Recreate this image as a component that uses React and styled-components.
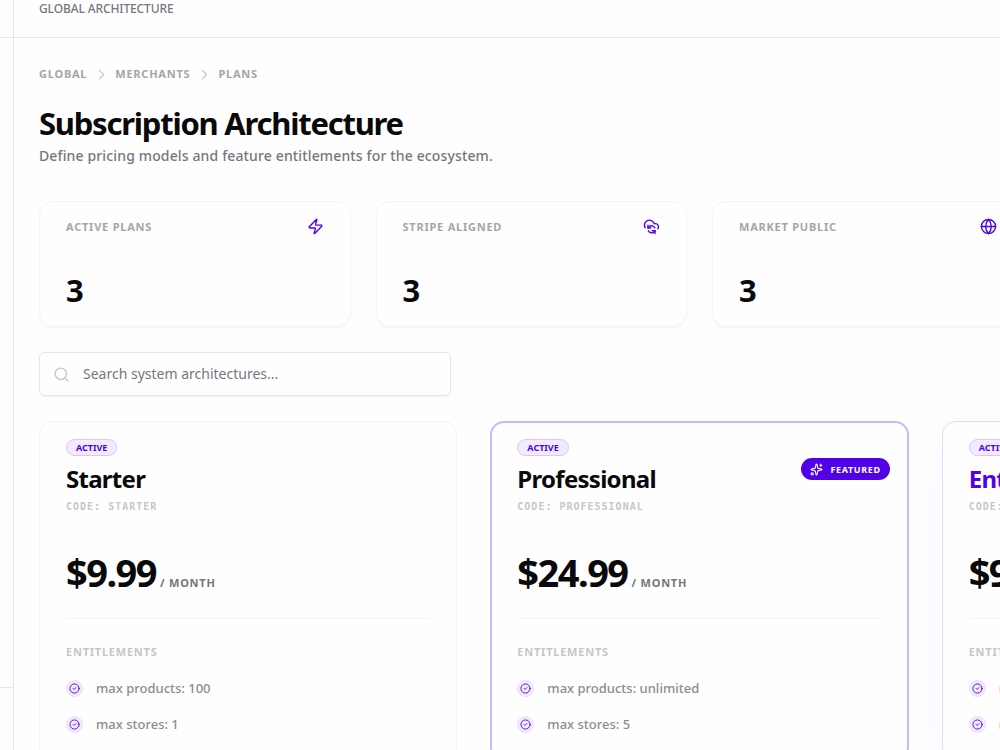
import React from "react";
import styled, { ThemeProvider, createGlobalStyle } from "styled-components";
import { ChevronRight, CircleCheck, Globe, Search, Sparkles, Zap } from "lucide-react";

const theme = {
  bg: "#fefefe",
  text: "#09090b",
  muted: "#76767e",
  faint: "#a5a5a8",
  ghost: "#c6c6ca",
  line: "#e5e5e7",
  softLine: "#f4f4f5",
  primary: "#5200e8",
  primaryTint: "#f2ebfd",
  primaryLine: "#d9c6fa",
  sans: '"Noto Sans", sans-serif',
  mono: '"DejaVu Sans Mono", monospace',
};

const GlobalStyle = createGlobalStyle`
  * {
    box-sizing: border-box;
  }
  body {
    margin: 0;
    font-family: ${(props) => props.theme.sans};
    background-color: ${(props) => props.theme.bg};
    color: ${(props) => props.theme.text};
  }
  h1, h2, h3, p, ul, ol {
    margin: 0;
    padding: 0;
  }
  ul, ol {
    list-style: none;
  }
`;

const Shell = styled.div`
  display: flex;
  height: 100vh;
`;

const Sidebar = styled.aside`
  flex: none;
  width: 14px;
  display: flex;
  flex-direction: column;
  justify-content: space-between;
  border-right: 1px solid ${(props) => props.theme.line};
`;

const SidebarHead = styled.div`
  height: 38px;
  border-bottom: 1px solid ${(props) => props.theme.line};
`;

const SidebarFoot = styled.div`
  height: 63px;
  border-top: 1px solid ${(props) => props.theme.line};
`;

const Scroller = styled.div`
  flex: 1;
  min-width: 0;
  overflow: auto;
  scrollbar-width: none;
`;

const Page = styled.div`
  min-width: 1372px;
`;

const TopBar = styled.header`
  height: 38px;
  padding: 0 25px;
  border-bottom: 1px solid ${(props) => props.theme.line};
  color: ${(props) => props.theme.muted};
  font-size: 12px;
  font-weight: 500;
  line-height: 18px;
  letter-spacing: -0.01em;
  text-transform: uppercase;
`;

const Content = styled.main`
  padding: 28px 26px 25px 25px;
`;

const Crumbs = styled.ol`
  display: flex;
  align-items: center;
  gap: 6px;
  height: 16px;
  color: ${(props) => props.theme.ghost};

  li {
    display: flex;
    align-items: center;
    gap: 5px;
  }
`;

const CrumbLink = styled.a`
  color: ${(props) => props.theme.faint};
  font-size: 11px;
  font-weight: 700;
  line-height: 16px;
  letter-spacing: 0.07em;
  text-decoration: none;
  text-transform: uppercase;
`;

const Title = styled.h1`
  margin-top: 21px;
  font-size: 31px;
  font-weight: 700;
  line-height: 40px;
  letter-spacing: -0.04em;
`;

const Subtitle = styled.p`
  color: ${(props) => props.theme.muted};
  font-size: 14px;
  font-weight: 500;
  line-height: 26px;
  letter-spacing: 0.01em;
`;

const Stats = styled.section`
  display: grid;
  grid-template-columns: repeat(4, 1fr);
  gap: 25px;
  margin-top: 32px;
`;

const StatCard = styled.div`
  padding: 16px 26px 17px;
  border: 1px solid ${(props) => props.theme.softLine};
  border-radius: 14px;
  box-shadow: 0 1px 2px rgba(0, 0, 0, 0.04);
`;

const StatTop = styled.div`
  display: flex;
  align-items: center;
  justify-content: space-between;
  color: ${(props) => props.theme.primary};
`;

const Label = styled.h3`
  color: ${(props) => (props.$pale ? props.theme.ghost : props.theme.faint)};
  font-size: 11px;
  font-weight: 700;
  line-height: 16px;
  letter-spacing: 0.07em;
  text-transform: uppercase;
`;

const StatValue = styled.p`
  margin-top: 37px;
  font-size: 31px;
  font-weight: 700;
  line-height: 37px;
`;

const SearchBox = styled.label`
  display: flex;
  align-items: center;
  gap: 13px;
  width: 412px;
  height: 44px;
  margin: 25px 0;
  padding: 0 13px;
  border: 1px solid ${(props) => props.theme.line};
  border-radius: 6px;
  box-shadow: 0 1px 2px rgba(0, 0, 0, 0.06);
  color: ${(props) => props.theme.ghost};
`;

const SearchInput = styled.input`
  flex: 1;
  min-width: 0;
  padding: 0;
  border: 0;
  outline: 0;
  background: none;
  color: ${(props) => props.theme.text};
  font-family: inherit;
  font-size: 14px;
  line-height: 24px;

  &::placeholder {
    color: ${(props) => props.theme.muted};
  }
`;

const Plans = styled.section`
  display: grid;
  grid-template-columns: repeat(3, 1fr);
  gap: 33px;
`;

const cardShadow = {
  plain: "0 1px 2px rgba(0, 0, 0, 0.04)",
  featured: "none",
  accent: "0 16px 40px rgba(82, 0, 232, 0.03)",
};

const cardBorder = {
  plain: "1px solid #f4f4f5",
  featured: "2px solid #cfb8f8",
  accent: "1px solid #e4d7fb",
};

const PlanCard = styled.article`
  position: relative;
  padding: ${(props) => (props.$tone === "featured" ? "16px 25px 25px" : "17px 26px 26px")};
  border: ${(props) => cardBorder[props.$tone]};
  border-radius: 14px;
  background-color: ${(props) => props.theme.bg};
  box-shadow: ${(props) => cardShadow[props.$tone]};
`;

const Status = styled.span`
  display: inline-block;
  padding: 0 9px;
  border: 1px solid ${(props) => props.theme.primaryLine};
  border-radius: 9px;
  background-color: ${(props) => props.theme.primaryTint};
  color: ${(props) => props.theme.primary};
  font-size: 9px;
  font-weight: 700;
  line-height: 15px;
  vertical-align: top;
`;

const Featured = styled.span`
  position: absolute;
  top: 35px;
  right: 17px;
  display: flex;
  align-items: center;
  gap: 8px;
  height: 22px;
  padding: 0 9px;
  border-radius: 11px;
  background-color: ${(props) => props.theme.primary};
  color: #fff;
  font-size: 9px;
  font-weight: 700;
  letter-spacing: 0.07em;
`;

const PlanName = styled.h2`
  margin-top: 2px;
  color: ${(props) => (props.$tone === "accent" ? props.theme.primary : props.theme.text)};
  font-size: 24px;
  font-weight: 700;
  line-height: 32px;
  letter-spacing: -0.03em;
`;

const PlanCode = styled.p`
  margin-top: 4px;
  color: ${(props) => props.theme.ghost};
  font-family: ${(props) => props.theme.mono};
  font-size: 10px;
  font-weight: 700;
  line-height: 16px;
  letter-spacing: 1px;
  text-transform: uppercase;
`;

const PriceRow = styled.p`
  display: flex;
  align-items: baseline;
  gap: 4px;
  margin-top: 32px;
  padding-bottom: 21px;
  border-bottom: 1px solid ${(props) => props.theme.softLine};
`;

const Price = styled.span`
  font-size: 38px;
  font-weight: 700;
  line-height: 50px;
  letter-spacing: -0.04em;
`;

const Period = styled.span`
  color: ${(props) => props.theme.muted};
  font-size: 11px;
  font-weight: 700;
  letter-spacing: 0.07em;
`;

const Features = styled.ul`
  display: flex;
  flex-direction: column;
  gap: 16px;
  margin-top: 18px;
`;

const Feature = styled.li`
  display: flex;
  align-items: center;
  gap: 13px;
  height: 20px;
  color: #8c8c92;
  font-size: 13px;
  font-weight: 500;
`;

const Tick = styled.span`
  display: grid;
  place-items: center;
  width: 17px;
  height: 17px;
  border: 1px solid #e9defc;
  border-radius: 50%;
  background-color: ${(props) => props.theme.primaryTint};
  color: ${(props) => props.theme.primary};
`;

const EntitlementsLabel = styled(Label)`
  margin-top: 25px;
`;

const CloudSync = ({ size }) => (
  <svg
    width={size}
    height={size}
    viewBox="0 0 24 24"
    fill="none"
    stroke="currentColor"
    strokeWidth="2"
    strokeLinecap="round"
    strokeLinejoin="round"
  >
    <path d="m17 18-1.535 1.605a5 5 0 0 1-8-1.5" />
    <path d="M17 22v-4h-4" />
    <path d="M20.996 15.251A4.5 4.5 0 0 0 17.495 8h-1.79a7 7 0 1 0-12.709 5.607" />
    <path d="M7 10v4h4" />
    <path d="m7 14 1.535-1.605a5 5 0 0 1 8 1.5" />
  </svg>
);

const crumbs = ["Global", "Merchants", "Plans"];

const stats = [
  { label: "Active Plans", value: 3, icon: Zap },
  { label: "Stripe Aligned", value: 3, icon: CloudSync },
  { label: "Market Public", value: 3, icon: Globe },
];

const plans = [
  {
    name: "Starter",
    price: "$9.99",
    tone: "plain",
    features: ["max products: 100", "max stores: 1"],
  },
  {
    name: "Professional",
    price: "$24.99",
    tone: "featured",
    features: ["max products: unlimited", "max stores: 5"],
  },
  {
    name: "Enterprise",
    price: "$99.99",
    tone: "accent",
    features: ["max products: unlimited", "max stores: unlimited"],
  },
];

const Plan = ({ plan }) => (
  <PlanCard $tone={plan.tone}>
    <Status>ACTIVE</Status>
    {plan.tone === "featured" && (
      <Featured>
        <Sparkles size={13} />
        FEATURED
      </Featured>
    )}
    <PlanName $tone={plan.tone}>{plan.name}</PlanName>
    <PlanCode>Code: {plan.name}</PlanCode>
    <PriceRow>
      <Price>{plan.price}</Price>
      <Period>/ MONTH</Period>
    </PriceRow>
    <EntitlementsLabel $pale>Entitlements</EntitlementsLabel>
    <Features>
      {plan.features.map((feature) => (
        <Feature key={feature}>
          <Tick>
            <CircleCheck size={11} />
          </Tick>
          {feature}
        </Feature>
      ))}
    </Features>
  </PlanCard>
);

const App = () => {
  return (
    <ThemeProvider theme={theme}>
      <GlobalStyle />
      <Shell>
        <Sidebar>
          <SidebarHead />
          <SidebarFoot />
        </Sidebar>
        <Scroller>
          <Page>
            <TopBar>Global Architecture</TopBar>
            <Content>
              <nav aria-label="Breadcrumb">
                <Crumbs>
                  {crumbs.map((crumb, i) => (
                    <li key={crumb}>
                      {i > 0 && <ChevronRight size={17} strokeWidth={1.5} />}
                      <CrumbLink href="#">{crumb}</CrumbLink>
                    </li>
                  ))}
                </Crumbs>
              </nav>
              <Title>Subscription Architecture</Title>
              <Subtitle>Define pricing models and feature entitlements for the ecosystem.</Subtitle>

              <Stats>
                {stats.map(({ label, value, icon: Icon }) => (
                  <StatCard key={label}>
                    <StatTop>
                      <Label>{label}</Label>
                      <Icon size={17} />
                    </StatTop>
                    <StatValue>{value}</StatValue>
                  </StatCard>
                ))}
              </Stats>

              <SearchBox>
                <Search size={17} />
                <SearchInput
                  type="text"
                  aria-label="Search plans"
                  placeholder="Search system architectures..."
                />
              </SearchBox>

              <Plans>
                {plans.map((plan) => (
                  <Plan key={plan.name} plan={plan} />
                ))}
              </Plans>
            </Content>
          </Page>
        </Scroller>
      </Shell>
    </ThemeProvider>
  );
};

export default App;
